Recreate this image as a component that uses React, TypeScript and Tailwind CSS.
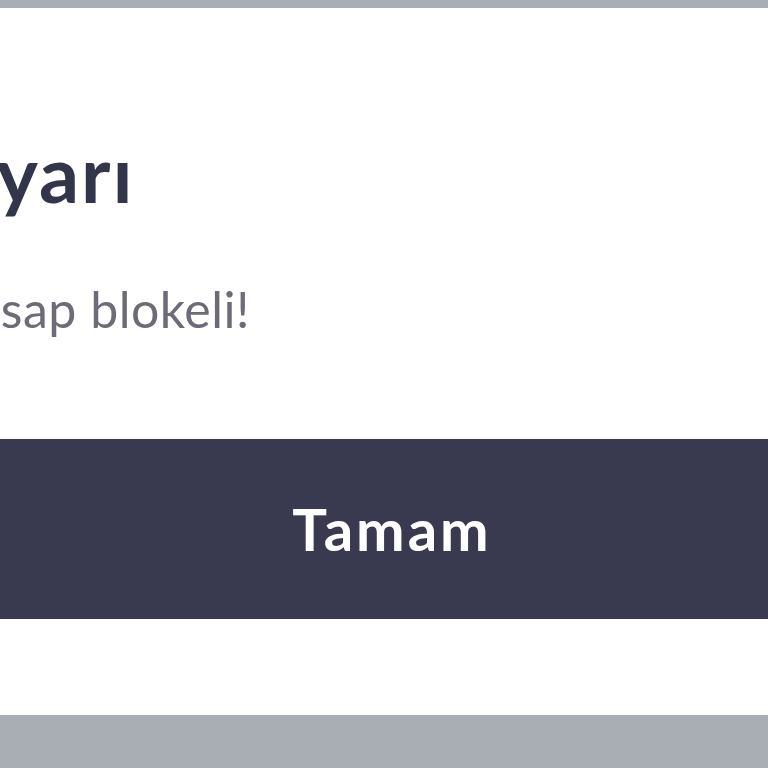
export default function App() {
  return (
    <div className="w-[768px] h-[768px] overflow-hidden bg-[#a9adb4] pt-[8px]" style={{ fontFamily: 'Lato, "Noto Sans", sans-serif' }}>
      {/* dialog, wider than the viewport and shifted left */}
      <div className="w-[1024px] -ml-[120px] h-[707px] bg-white pt-[125px] flex flex-col">
        <div className="pl-[56px]">
          <h2 className="text-[79px] leading-none font-bold tracking-[2px] text-[#33354a] h-[78px]">Uyarı</h2>
          <p className="mt-[73px] text-[50px] leading-none tracking-[0.5px] text-[#6b6c78] h-[50px]">Hesap blokeli!</p>
        </div>
        <button className="mt-[105px] h-[180px] w-full bg-[#393a50] text-white text-[58px] font-bold leading-none tracking-[3px]">
          Tamam
        </button>
      </div>
    </div>
  );
}
